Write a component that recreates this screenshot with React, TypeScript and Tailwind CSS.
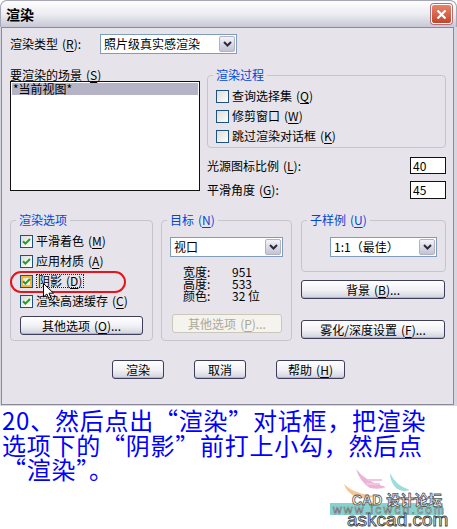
import React from 'react'

const cjk = "font-['Noto_Sans_CJK_SC','Noto_Sans',sans-serif]"

function Mn({ k }: { k: string }) {
  return (
    <span className="pl-[4px]">
      (<span className="underline underline-offset-2">{k}</span>)
    </span>
  )
}

function Check({ checked, hot }: { checked?: boolean; hot?: boolean }) {
  return (
    <span className="relative flex h-[13px] w-[13px] shrink-0 items-center justify-center border border-[#1c5180] bg-linear-to-br from-[#dcdcd7] to-white">
      {hot && <span className="absolute inset-0 border-2 border-[#f8b636]" />}
      {checked && (
        <svg width="9" height="9" viewBox="0 0 9 9" className="relative">
          <path d="M1 4.2 L3.4 6.6 L8 2" stroke="#21a121" strokeWidth="2" fill="none" />
        </svg>
      )}
    </span>
  )
}

function Btn({
  children,
  className,
  disabled,
}: {
  children: React.ReactNode
  className?: string
  disabled?: boolean
}) {
  return (
    <div
      className={
        disabled
          ? `flex h-[19px] items-center justify-center rounded-[3px] border border-[#cac8bb] bg-[#f4f3ee] text-[12px] leading-[14px] text-[#aca899] ${className}`
          : `flex h-[19px] items-center justify-center rounded-[3px] border border-[#3d3d5c] bg-linear-to-b from-white via-[#f2f2f6] to-[#d2d2de] text-[12px] leading-[14px] text-black shadow-[inset_0_-1px_0_#b4b4c6] ${className}`
      }
    >
      {children}
    </div>
  )
}

function Select({ text, className }: { text: string; className?: string }) {
  return (
    <div className={`flex h-[20px] items-center border border-[#7f9db9] bg-white ${className}`}>
      <span className="flex-1 pl-[3px] text-[12px] leading-[14px] text-black">{text}</span>
      <span className="mr-[1px] flex h-[16px] w-[16px] items-center justify-center rounded-[2px] border border-[#b2b2c6] bg-linear-to-b from-[#f4f4f8] to-[#c2c2d4]">
        <svg width="9" height="6" viewBox="0 0 9 6">
          <path d="M1 1 L4.5 4.5 L8 1" stroke="#2b2b3d" strokeWidth="2" fill="none" />
        </svg>
      </span>
    </div>
  )
}

function Group({
  title,
  className,
  children,
}: {
  title: React.ReactNode
  className?: string
  children: React.ReactNode
}) {
  return (
    <fieldset className={`rounded-[4px] border border-[#c5c5cf] ${className}`}>
      <legend className="ml-[5px] px-[3px] text-[12px] leading-[14px] text-[#0046d5]">{title}</legend>
      {children}
    </fieldset>
  )
}

function Row({ children }: { children: React.ReactNode }) {
  return <div className="relative flex h-[20px] items-center gap-[3px] text-[12px] leading-[14px] text-black">{children}</div>
}

function Watermark() {
  return (
    <div className="absolute left-[330px] top-[460px] h-[69px] w-[127px]">
      <svg width="127" height="69" viewBox="0 0 127 69" className="absolute left-0 top-0">
        <path d="M26 9 Q36 22 56 27 Q50 30 40 28 Q30 22 26 9 Z" fill="#e9a6cf" opacity="0.85" />
        <path d="M38 20 L52 20 M36 24 L50 24" stroke="#f3c6df" strokeWidth="2" />
        <path d="M60 13 Q66 26 80 30 Q72 33 66 28 Q60 22 60 13 Z" fill="#8fd6d6" opacity="0.85" />
        <path d="M14 24 Q24 34 46 36 Q36 40 26 37 Q16 32 14 24 Z" fill="#f2b878" opacity="0.8" />
        <rect x="0" y="43" width="113" height="12" fill="#86d2d0" />
        <text x="22" y="45" fontFamily="'Liberation Sans','Noto Sans CJK SC',sans-serif" fontSize="14" fontWeight="bold" fill="#fff" stroke="#555" strokeWidth="0.8">
          CAD 设计论坛
        </text>
        <text x="3" y="54" fontFamily="'Liberation Sans',sans-serif" fontSize="12" letterSpacing="2.2" fill="#fff" stroke="#666" strokeWidth="0.6">
          www.icwcn.com
        </text>
        <text x="17" y="66" fontFamily="'Liberation Sans',sans-serif" fontSize="19" fill="#fff" stroke="#444" strokeWidth="0.9">
          askcad.com
        </text>
      </svg>
    </div>
  )
}

export default function App() {
  return (
    <div className={`relative h-[529px] w-[457px] overflow-hidden bg-white ${cjk}`}>
      <div className="rounded-t-[7px] bg-[#d6d6e0] pb-[1px]">
        <div className="flex h-[27px] items-center rounded-t-[7px] border-x border-t border-[#a6a6b6] bg-linear-to-b from-[#fefefe] via-[#ececf2] to-[#c8c8d6] pl-[5px] pr-[4px]">
          <span className="text-[14px] font-bold leading-none text-black">渲染</span>
          <div className="ml-auto flex h-[20px] w-[21px] items-center justify-center rounded-[3px] border border-white bg-linear-to-b from-[#e98469] to-[#c2452b] shadow-[0_0_0_1px_#b0707a]">
            <svg width="11" height="11" viewBox="0 0 11 11">
              <path d="M1.5 1.5 L9.5 9.5 M9.5 1.5 L1.5 9.5" stroke="#fff" strokeWidth="2.2" />
            </svg>
          </div>
        </div>

        <div className="ml-[1px] mr-[3px] border border-[#8a8a9a] bg-[#e6e4ea] pb-[25px] pl-[8px] pr-[6px] pt-[6px] text-black">
          {/* 渲染类型 */}
          <div className="flex h-[20px] items-center">
            <span className="w-[90px] text-[12px] leading-[14px]">
              渲染类型<Mn k="R" />:
            </span>
            <Select text="照片级真实感渲染" className="w-[137px]" />
          </div>

          {/* 场景 + 渲染过程 */}
          <div className="mt-[14px] flex items-start gap-[7px]">
            <div className="w-[190px]">
              <div className="h-[13px] text-[12px] leading-[13px]">
                要渲染的场景<Mn k="S" />
              </div>
              <div className="h-[110px] border border-[#111] bg-white p-[1px]">
                <div className="h-[12px] bg-[#b4b4c6] pl-[1px] text-[12px] leading-[12px]">*当前视图*</div>
              </div>
            </div>
            <div className="w-[239px]">
              <Group title="渲染过程" className="w-[239px]">
                <div className="pb-[1px] pl-[8px] pt-[4px]">
                  <Row>
                    <Check />
                    <span>查询选择集<Mn k="Q" /></span>
                  </Row>
                  <Row>
                    <Check />
                    <span>修剪窗口<Mn k="W" /></span>
                  </Row>
                  <Row>
                    <Check />
                    <span>跳过渲染对话框<Mn k="K" /></span>
                  </Row>
                </div>
              </Group>
              <div className="mt-[9px] flex h-[17px] items-center text-[12px] leading-[14px]">
                <span>光源图标比例<Mn k="L" />:</span>
                <span className="ml-auto flex h-[17px] w-[36px] items-center border border-[#111] bg-white pl-[2px]">40</span>
              </div>
              <div className="mt-[7px] flex h-[18px] items-center text-[12px] leading-[14px]">
                <span>平滑角度<Mn k="G" />:</span>
                <span className="ml-auto flex h-[18px] w-[36px] items-center border border-[#111] bg-white pl-[2px]">45</span>
              </div>
            </div>
          </div>

          {/* 三个分组 */}
          <div className="mt-[14px] flex items-stretch">
            <Group title="渲染选项" className="w-[143px]">
              <div className="pb-[5px] pl-[9px] pt-[4px]">
                <Row>
                  <Check checked />
                  <span>平滑着色<Mn k="M" /></span>
                </Row>
                <Row>
                  <Check checked />
                  <span>应用材质<Mn k="A" /></span>
                </Row>
                <Row>
                  <span className="absolute left-[-10px] top-0 h-[22px] w-[116px] rounded-[11px] border-2 border-[#e8141c]" />
                  <Check checked hot />
                  <span className="border border-dotted border-[#222] px-[1px] leading-[12px]">阴影<Mn k="D" /></span>
                  <svg width="12" height="18" viewBox="0 0 12 18" className="absolute left-[23px] top-[12px]">
                    <path d="M0.5 0.5 L0.5 14 L3.8 11 L6.5 17 L8.6 16 L6 10.2 L10.5 10.2 Z" fill="#fff" stroke="#000" strokeWidth="1" />
                  </svg>
                </Row>
                <Row>
                  <Check checked />
                  <span>渲染高速缓存<Mn k="C" /></span>
                </Row>
                <Btn className="mt-[5px] w-[123px]">
                  其他选项<Mn k="O" />...
                </Btn>
              </div>
            </Group>

            <Group title={<span>目标<Mn k="N" /></span>} className="ml-[8px] w-[131px]">
              <div className="pb-[7px] pl-[8px]">
                <Select text="视口" className="mt-[10px] w-[113px]" />
                <div className="ml-[13px] mt-[9px] grid grid-cols-[49px_auto] text-[12px] leading-[12px]">
                  <span>宽度:</span>
                  <span>951</span>
                  <span>高度:</span>
                  <span>533</span>
                  <span>颜色:</span>
                  <span>32 位</span>
                </div>
                <Btn disabled className="ml-[2px] mt-[12px] w-[110px]">
                  其他选项<Mn k="P" />...
                </Btn>
              </div>
            </Group>

            <div className="ml-[9px] flex w-[145px] flex-col">
              <Group title={<span>子样例<Mn k="U" /></span>} className="w-[145px]">
                <div className="pb-[14px] pl-[28px]">
                  <Select text="1:1（最佳）" className="mt-[10px] w-[107px]" />
                </div>
              </Group>
              <Btn className="mt-[8px] w-[144px]">
                背景<Mn k="B" />...
              </Btn>
              <Btn className="mt-[21px] w-[144px]">
                雾化/深度设置<Mn k="F" />...
              </Btn>
            </div>
          </div>

          {/* 底部按钮 */}
          <div className="mt-[19px] flex justify-center gap-[30px]">
            <Btn className="w-[52px]">渲染</Btn>
            <Btn className="w-[52px]">取消</Btn>
            <Btn className="w-[69px]">
              帮助<Mn k="H" />
            </Btn>
          </div>
        </div>
      </div>

      <p className="pl-[2px] pt-[2px] text-[24px] leading-[24.5px] tracking-[0.75px] text-[#0000ff]">
        20、然后点出“渲染”对话框，把渲染
        <br />
        选项下的“阴影”前打上小勾，然后点
        <br />
        “渲染”。
      </p>

      <Watermark />
    </div>
  )
}
